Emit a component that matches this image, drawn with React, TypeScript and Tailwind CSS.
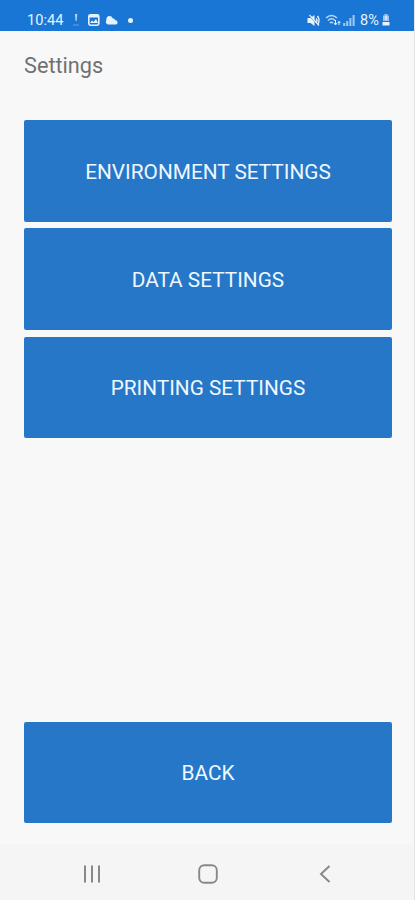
import React from "react";

const menuItems = ["ENVIRONMENT SETTINGS", "DATA SETTINGS", "PRINTING SETTINGS"];

function MenuButton({ label }: { label: string }) {
  return (
    <button className="flex h-[101.5px] w-full shrink-0 items-center justify-center rounded-[2px] bg-[#2677c7] pt-0.5 text-[20.8px] text-[#eef8ff]">
      {label}
    </button>
  );
}

function StatusBar() {
  return (
    <header className="flex h-[31px] shrink-0 items-center justify-between bg-[#1976d5] pt-[9px] pr-[24px] pl-[27px] text-[#e4f3ff]">
      <div className="flex items-center">
        <span className="w-[37px] pt-px text-[14.6px] leading-none">10:44</span>
        {/* Alert */}
        <svg className="ml-[9px]" width="6" height="12" viewBox="0 0 6 12">
          <path d="M2 0h2.2L3.6 7h-1z" fill="currentColor" opacity="0.8" />
          <path d="M0 11h6" stroke="currentColor" opacity="0.35" />
        </svg>
        {/* Gallery */}
        <svg className="ml-[9px]" width="12" height="12" viewBox="0 0 12 12">
          <rect x="0.8" y="0.8" width="10" height="10.4" rx="1.6" fill="none" stroke="currentColor" strokeWidth="1.6" />
          <path d="M1 1h10v2.5H1z" fill="currentColor" />
          <path d="M2 9l2-2.5 1.5 1.5L8 5l2 4z" fill="currentColor" />
        </svg>
        {/* Weather */}
        <svg className="ml-[5px]" width="13" height="10" viewBox="0 0 13 10">
          <path d="M4.5 1a3.2 3.2 0 0 1 3.1 2.3 2.8 2.8 0 0 1 2.6 2 2.1 2.1 0 0 1 .5 4.2H3.5A2.8 2.8 0 0 1 1.4 5 3.2 3.2 0 0 1 4.5 1z" fill="currentColor" />
        </svg>
        <span className="ml-[10px] h-[5px] w-[5px] rounded-full bg-[#e4f3ff]" />
      </div>

      <div className="flex items-center">
        {/* Muted */}
        <svg width="13" height="13" viewBox="0 0 13 13">
          <path d="M0.5 4H3.5L7.5 1v11L3.5 9H0.5z" fill="currentColor" />
          <path d="M9 4.5q2 2 0 4M10.5 2q3 4.5 0 9" fill="none" stroke="currentColor" strokeWidth="1.4" />
          <path d="M1.5 1l10.5 11" stroke="#1976d5" strokeWidth="1" />
          <path d="M2.5 1l9.5 10.5" stroke="currentColor" strokeWidth="1.2" />
        </svg>
        {/* Wifi */}
        <svg className="ml-[5px]" width="17" height="13" viewBox="0 0 17 13">
          <path d="M1 4q5.5-5 11 0M3 6.5q3.5-3.5 7 0M5 9q1.5-1.7 3 0" fill="none" stroke="currentColor" strokeWidth="1.5" opacity="0.8" />
          <path d="M10.5 6v4.5M9 9l1.5 2L12 9M14 11V7.5M12.8 9L14 7.3l1.4 1.7" fill="none" stroke="currentColor" />
        </svg>
        {/* Signal */}
        <svg className="ml-px" width="12" height="12" viewBox="0 0 12 12">
          <path d="M1.2 9v3M4.2 7v5M7.4 4v8M10.6 1v11" stroke="currentColor" strokeWidth="2.1" opacity="0.65" />
        </svg>
        <span className="ml-[5px] w-[21px] pt-[3px] text-[14.5px] leading-none">8%</span>
        {/* Battery */}
        <svg className="ml-px" width="8" height="12" viewBox="0 0 8 12">
          <path d="M2.5 0h3v1.5H7V7H1V1.5h1.5z" fill="currentColor" opacity="0.65" />
          <path d="M0.5 8h7v3.5h-7z" fill="currentColor" />
          <path d="M4 2v4" stroke="#fff" />
        </svg>
      </div>
    </header>
  );
}

function NavigationBar() {
  return (
    <nav className="flex h-[56px] shrink-0 items-center bg-[#f5f5f5] pt-[3px] pr-[31px] pl-[34px] text-[#888]">
      <button className="flex flex-1 justify-center" aria-label="Recent apps">
        <svg width="18" height="18" viewBox="0 0 18 18">
          <path d="M2 0.5v17M9 0.5v17M16 0.5v17" stroke="currentColor" strokeWidth="2" />
        </svg>
      </button>
      <button className="flex flex-1 justify-center" aria-label="Home">
        <svg width="20" height="20" viewBox="0 0 20 20">
          <rect x="1.2" y="1.2" width="17.6" height="17.6" rx="5" fill="none" stroke="currentColor" strokeWidth="1.9" />
        </svg>
      </button>
      <button className="flex flex-1 justify-center" aria-label="Back">
        <svg width="12" height="18" viewBox="0 0 12 18">
          <path d="M10.5 1L2 9l8.5 8" fill="none" stroke="currentColor" strokeWidth="2" />
        </svg>
      </button>
    </nav>
  );
}

export default function App() {
  return (
    <div className="flex h-[900px] w-[415px] flex-col border-r border-[#e3e3e3] bg-[#f8f8f8] font-['Roboto',sans-serif]">
      <StatusBar />
      <main className="flex flex-1 flex-col pt-[21px] pr-[22px] pb-[21px] pl-6">
        <h1 className="h-[68.4px] text-[21.7px] leading-7 text-[#717171]">Settings</h1>
        <div className="flex flex-col gap-[6.6px]">
          {menuItems.map((item) => (
            <MenuButton key={item} label={item} />
          ))}
        </div>
        <div className="mt-auto">
          <MenuButton label="BACK" />
        </div>
      </main>
      <NavigationBar />
    </div>
  );
}
